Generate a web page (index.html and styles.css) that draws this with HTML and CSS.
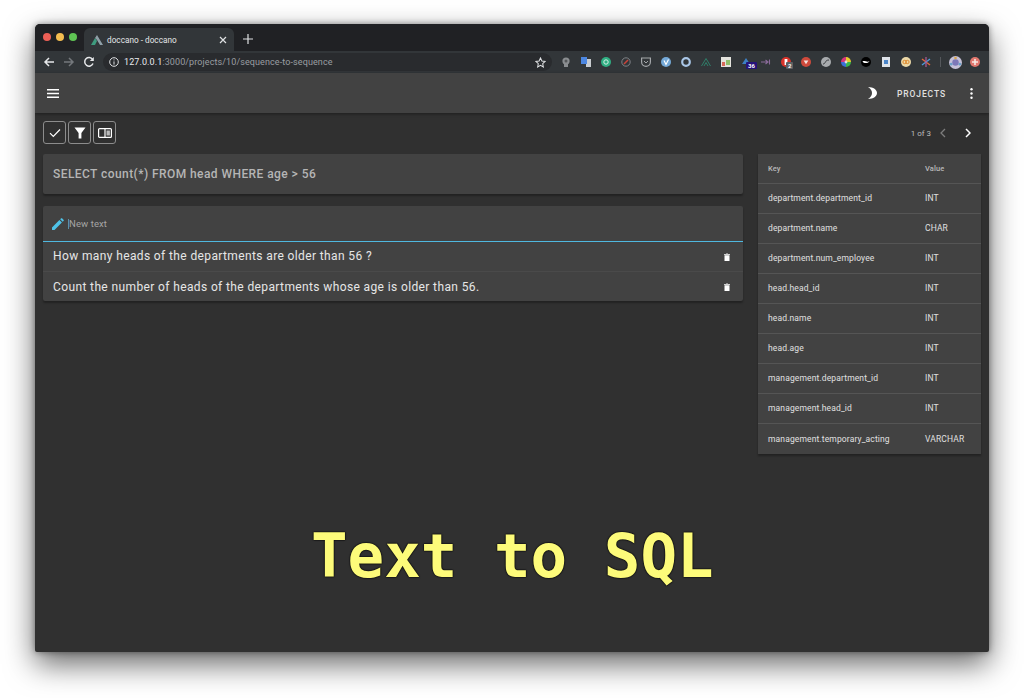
FILE: index.html
```html
<!DOCTYPE html>
<html>
<head>
    <title>doccano - doccano</title>
    <meta charset="utf-8">
    <link rel="stylesheet" href="styles.css">
</head>
<body>
    <div class="window">
        <div class="tabstrip">
            <div class="lights">
                <span class="light red"></span>
                <span class="light yellow"></span>
                <span class="light green"></span>
            </div>
            <div class="tab">
                <svg class="favicon" viewBox="0 0 12 10" width="12" height="10"><path d="M0 10 L4 3 L6 6 L4 10 Z" fill="#3f9c7f"/><path d="M4 3 L6 0 L12 10 L9 10 L6 5 Z" fill="#8fa0a8"/></svg>
                <span class="tab-title">doccano - doccano</span>
                <svg class="tab-close" viewBox="0 0 8 8" width="8" height="8"><path d="M1 1 L7 7 M7 1 L1 7" stroke="#dfe1e3" stroke-width="1.2"/></svg>
            </div>
            <svg class="new-tab" viewBox="0 0 10 10" width="10" height="10"><path d="M5 0 V10 M0 5 H10" stroke="#dfe1e3" stroke-width="1.2"/></svg>
        </div>

        <div class="urlbar">
            <svg class="nav" viewBox="0 0 12 12" width="12" height="12"><path d="M11 6 H2 M6 2 L2 6 L6 10" fill="none" stroke="#e6e8ea" stroke-width="1.5"/></svg>
            <svg class="nav" viewBox="0 0 12 12" width="12" height="12"><path d="M1 6 H10 M6 2 L10 6 L6 10" fill="none" stroke="#74787c" stroke-width="1.5"/></svg>
            <svg class="nav" viewBox="0 0 12 12" width="12" height="12"><path d="M10 7.5 A4.3 4.3 0 1 1 9.6 3.4" fill="none" stroke="#e6e8ea" stroke-width="1.5"/><path d="M10.8 1 V5 H6.8 Z" fill="#e6e8ea"/></svg>
            <div class="omnibox">
                <svg viewBox="0 0 10 10" width="10" height="10"><circle cx="5" cy="5" r="4.3" fill="none" stroke="#dfe1e3"/><path d="M5 4.4 V7.6 M5 2.4 V3.4" stroke="#dfe1e3"/></svg>
                <span class="url"><b>127.0.0.1</b>:3000/projects/10/sequence-to-sequence</span>
                <svg class="star" viewBox="0 0 12 12" width="11" height="11"><path d="M6 1 L7.5 4.4 L11 4.8 L8.4 7.2 L9.1 10.8 L6 9 L2.9 10.8 L3.6 7.2 L1 4.8 L4.5 4.4 Z" fill="none" stroke="#dfe1e3" stroke-width="1.1"/></svg>
            </div>
            <div class="extensions">
                <span class="ext"><svg viewBox="0 0 10 10"><circle cx="5" cy="4" r="3.6" fill="#8a8d90"/><rect x="3" y="7" width="4" height="3" fill="#8a8d90"/><circle cx="5" cy="4" r="1.5" fill="#55585a"/></svg></span>
                <span class="ext"><svg viewBox="0 0 10 10"><rect x="5" y="2" width="5" height="8" fill="#c9ccd0"/><rect x="0" y="0" width="6" height="7" fill="#4c86e0"/></svg></span>
                <span class="ext"><svg viewBox="0 0 10 10"><circle cx="5" cy="5" r="5" fill="#2fae82"/><circle cx="5" cy="5" r="2.2" fill="none" stroke="#d6f0e6"/></svg></span>
                <span class="ext"><svg viewBox="0 0 10 10"><circle cx="5" cy="5" r="4.2" fill="none" stroke="#7e8286"/><path d="M3 7 L7 3" stroke="#c9433a" stroke-width="1.6"/></svg></span>
                <span class="ext"><svg viewBox="0 0 10 10"><path d="M0.6 1 H9.4 V5 A4.4 4.4 0 0 1 0.6 5 Z" fill="none" stroke="#a4a7aa" stroke-width="1.2"/><path d="M3 4 L5 6 L7 4" fill="none" stroke="#a4a7aa"/></svg></span>
                <span class="ext"><svg viewBox="0 0 10 10"><circle cx="5" cy="5" r="5" fill="#74a9d8"/><path d="M3 3.5 L5 7.5 L7.5 2.5" fill="none" stroke="#fff" stroke-width="1.2"/></svg></span>
                <span class="ext"><svg viewBox="0 0 10 10"><circle cx="5" cy="5" r="3.8" fill="none" stroke="#a9c6e6" stroke-width="2.2"/></svg></span>
                <span class="ext"><svg viewBox="0 0 10 10"><path d="M0.5 9 L5 1.5 L9.5 9 M3 9 L5 5.5 L7 9" fill="none" stroke="#2f7f6a" stroke-width="1"/></svg></span>
                <span class="ext"><svg viewBox="0 0 10 10"><rect width="10" height="10" fill="#e4e4de"/><rect x="1" y="5" width="3" height="4" fill="#d76a5a"/><rect x="5" y="3" width="4" height="5" fill="#8fbf6a"/></svg></span>
                <span class="ext ext-badged"><svg viewBox="0 0 10 10"><path d="M1 7 L5 1 L9 7 Z" fill="#3d7fc4"/></svg><em class="badge badge-blue">36</em></span>
                <span class="ext"><svg viewBox="0 0 10 10"><path d="M0 5 H7 M4.5 3 L7 5 L4.5 7 M8.5 2.5 V7.5" fill="none" stroke="#8a6a9a" stroke-width="1.1"/></svg></span>
                <span class="ext ext-badged"><svg viewBox="0 0 10 10"><circle cx="5" cy="5" r="5" fill="#d9342b"/><rect x="3.6" y="2" width="2.8" height="6" fill="#fff"/></svg><em class="badge badge-grey">2</em></span>
                <span class="ext"><svg viewBox="0 0 10 10"><circle cx="5" cy="5" r="5" fill="#cf4a3c"/><path d="M2.6 3.6 H7.4 L5 7.2 Z" fill="#f4e4e0"/></svg></span>
                <span class="ext"><svg viewBox="0 0 10 10"><circle cx="5" cy="5" r="5" fill="#a8abae"/><path d="M2 7 C5 7 3.5 3 8 3" fill="none" stroke="#3a3d40" stroke-width="1"/></svg></span>
                <span class="ext"><svg viewBox="0 0 10 10"><path d="M5 5 L5 0 A5 5 0 0 1 10 5 Z" fill="#e8c92e"/><path d="M5 5 L10 5 A5 5 0 0 1 5 10 Z" fill="#3ab54a"/><path d="M5 5 L5 10 A5 5 0 0 1 0 5 Z" fill="#3a6fd8"/><path d="M5 5 L0 5 A5 5 0 0 1 5 0 Z" fill="#d8357a"/><circle cx="5" cy="5" r="1.4" fill="#ddd"/></svg></span>
                <span class="ext"><svg viewBox="0 0 10 10"><circle cx="5" cy="5" r="5" fill="#000"/><path d="M1.5 4.5 C3 3 7 6 8.5 3.8 C8 6.4 3 7 1.5 4.5 Z" fill="#fff"/></svg></span>
                <span class="ext"><svg viewBox="0 0 10 10"><rect x="1" width="8" height="10" fill="#dfe4ea"/><rect x="3" y="3" width="4" height="4" fill="#4c86c9"/></svg></span>
                <span class="ext"><svg viewBox="0 0 10 10"><circle cx="5" cy="5" r="5" fill="#ecd9a8"/><circle cx="3.6" cy="5" r="1.7" fill="none" stroke="#e08a2e"/><circle cx="6.4" cy="5" r="1.7" fill="none" stroke="#e08a2e"/></svg></span>
                <span class="ext"><svg viewBox="0 0 10 10"><path d="M1 2 L9 8" stroke="#e0653a" stroke-width="1.4"/><path d="M9 2 L1 8" stroke="#4c9ad8" stroke-width="1.4"/><path d="M5 0 V10" stroke="#b05a9a" stroke-width="1.2"/></svg></span>
                <span class="ext-sep"></span>
                <span class="ext ext-avatar"><svg viewBox="0 0 12 12"><circle cx="6" cy="6" r="6" fill="#c6c2d8"/><circle cx="6" cy="6" r="3" fill="#7d78b8"/><circle cx="6" cy="1.8" r="1.2" fill="#d8a74a"/><circle cx="2" cy="7.5" r="1.2" fill="#6aa0c8"/><circle cx="10" cy="7.5" r="1.2" fill="#6aa0c8"/></svg></span>
                <span class="ext"><svg viewBox="0 0 10 10"><circle cx="5" cy="5" r="5" fill="#e0776e"/><path d="M5 2 V8 M2 5 H8" stroke="#f8e8e4" stroke-width="1.6"/></svg></span>
            </div>
        </div>

        <header class="appbar">
            <svg class="menu" viewBox="0 0 12 9" width="12" height="9"><path d="M0 .75 H12 M0 4.5 H12 M0 8.25 H12" stroke="#fff" stroke-width="1.3"/></svg>
            <svg class="moon" viewBox="0 0 9 12" width="9" height="12"><path d="M0 0 C5.5 0 9 2.8 9 6 C9 9.2 5.5 12 0 12 C2.6 10.4 4 8.2 4 6 C4 3.8 2.6 1.6 0 0 Z" fill="#fff"/></svg>
            <span class="projects">PROJECTS</span>
            <svg class="kebab" viewBox="0 0 3 11" width="3" height="11"><circle cx="1.5" cy="1.3" r="1.2" fill="#fff"/><circle cx="1.5" cy="5.5" r="1.2" fill="#fff"/><circle cx="1.5" cy="9.7" r="1.2" fill="#fff"/></svg>
        </header>

        <main class="content">
            <div class="toolbar">
                <button class="tool"><svg viewBox="0 0 12 10" width="12" height="10"><path d="M1 5.2 L4.3 8.5 L11 1.5" fill="none" stroke="#fff" stroke-width="1.2"/></svg></button>
                <button class="tool"><svg viewBox="0 0 12 12" width="12" height="12"><path d="M0.5 0.5 H11.5 L7.4 6 V11.5 H4.6 V6 Z" fill="#fff"/></svg></button>
                <button class="tool"><svg viewBox="0 0 14 10" width="14" height="10"><rect x="0.6" y="0.6" width="12.8" height="8.8" rx="1" fill="none" stroke="#fff" stroke-width="1.2"/><path d="M7 0.6 V9.4" stroke="#fff" stroke-width="1.2"/><rect x="8.5" y="2.5" width="3.4" height="5" fill="#bbb"/></svg></button>
                <div class="pager">
                    <span>1 of 3</span>
                    <svg viewBox="0 0 6 10" width="6" height="10"><path d="M5 1 L1 5 L5 9" fill="none" stroke="#7d7d7d" stroke-width="1.3"/></svg>
                    <svg viewBox="0 0 6 10" width="6" height="10"><path d="M1 1 L5 5 L1 9" fill="none" stroke="#fff" stroke-width="1.5"/></svg>
                </div>
            </div>

            <div class="columns">
                <div class="left">
                    <div class="card source">SELECT count(*) FROM head WHERE age &gt; 56</div>
                    <div class="card">
                        <div class="new-text">
                            <svg viewBox="0 0 12 12" width="12" height="12"><path d="M0 12 V9.5 L7.4 2.1 L9.9 4.6 L2.5 12 Z M8.2 1.3 L9.2 .3 Q9.6 0 10 .3 L11.7 2 Q12 2.4 11.7 2.8 L10.7 3.8 Z" fill="#4fc3e8"/></svg>
                            <span class="caret"></span><span>New text</span>
                        </div>
                        <div class="sentence">
                            <span>How many heads of the departments are older than 56 ?</span>
                            <svg viewBox="0 0 6 8" width="6" height="8"><path d="M0 1 H2 L2.3 .4 H3.7 L4 1 H6 V1.8 H0 Z M.5 2.3 H5.5 V8 H.5 Z" fill="#fff"/></svg>
                        </div>
                        <div class="sentence">
                            <span>Count the number of heads of the departments whose age is older than 56.</span>
                            <svg viewBox="0 0 6 8" width="6" height="8"><path d="M0 1 H2 L2.3 .4 H3.7 L4 1 H6 V1.8 H0 Z M.5 2.3 H5.5 V8 H.5 Z" fill="#fff"/></svg>
                        </div>
                    </div>
                </div>

                <table class="schema">
                    <thead>
                        <tr><th>Key</th><th>Value</th></tr>
                    </thead>
                    <tbody>
                        <tr><td>department.department_id</td><td>INT</td></tr>
                        <tr><td>department.name</td><td>CHAR</td></tr>
                        <tr><td>department.num_employee</td><td>INT</td></tr>
                        <tr><td>head.head_id</td><td>INT</td></tr>
                        <tr><td>head.name</td><td>INT</td></tr>
                        <tr><td>head.age</td><td>INT</td></tr>
                        <tr><td>management.department_id</td><td>INT</td></tr>
                        <tr><td>management.head_id</td><td>INT</td></tr>
                        <tr class="last"><td>management.temporary_acting</td><td>VARCHAR</td></tr>
                    </tbody>
                </table>
            </div>

            <div class="caption">Text to SQL</div>
        </main>
    </div>
</body>
</html>
```

FILE: styles.css
```css
html, body {
    margin: 0;
    height: 698px;
    overflow: hidden;
    background-color: #fff;
}

body {
    padding: 24px 35px 0;
    box-sizing: border-box;
    font-family: 'Roboto', 'Liberation Sans', sans-serif;
    color: #fff;
}

.window {
    display: flex;
    flex-direction: column;
    width: 954px;
    height: 628px;
    border-radius: 5px 5px 2px 2px;
    overflow: hidden;
    background-color: #303030;
    box-shadow: 0 12px 30px rgba(0, 0, 0, 0.6), 0 0 6px rgba(0, 0, 0, 0.4);
}

.tabstrip {
    display: flex;
    align-items: flex-end;
    height: 27px;
    background-color: #202124;
    flex-shrink: 0;
}

.lights {
    display: flex;
    gap: 5px;
    align-self: flex-start;
    margin: 9px 0 0 8px;
    width: 41px;
}

.light {
    width: 8px;
    height: 8px;
    border-radius: 50%;
}

.red { background-color: #ed5f56; }
.yellow { background-color: #f4bd4f; }
.green { background-color: #5fc454; }

.tab {
    display: flex;
    align-items: center;
    width: 150px;
    height: 23px;
    box-sizing: border-box;
    padding: 0 7px 0 7px;
    border-radius: 6px 6px 0 0;
    background-color: #323639;
}

.favicon {
    margin-right: 4px;
}

.tab-title {
    flex: 1;
    font-size: 8.2px;
    letter-spacing: 0.02px;
    color: #e4e6e8;
}

.new-tab {
    margin: 0 0 7px 9px;
}

.urlbar {
    display: flex;
    align-items: center;
    height: 22px;
    padding-left: 8px;
    background-color: #323639;
    flex-shrink: 0;
}

.nav {
    margin-right: 8px;
}

.omnibox {
    display: flex;
    align-items: center;
    width: 449px;
    height: 18px;
    padding: 0 6px;
    box-sizing: border-box;
    border-radius: 9px;
    background-color: #292b2e;
}

.url {
    flex: 1;
    margin-left: 5px;
    font-size: 9px;
    letter-spacing: 0.1px;
    color: #9a9ea2;
}

.url b {
    font-weight: 400;
    color: #e8eaed;
}

.extensions {
    display: flex;
    align-items: center;
    margin-left: 4px;
}

.ext {
    position: relative;
    display: flex;
    justify-content: center;
    width: 20px;
}

.ext svg {
    width: 10px;
    height: 10px;
}

.ext-avatar svg {
    width: 13px;
    height: 13px;
}

.badge {
    position: absolute;
    left: 10px;
    top: 5px;
    padding: 0 2px;
    border-radius: 1px;
    font-size: 6px;
    line-height: 7px;
    font-style: normal;
    font-weight: 700;
}

.badge-blue { background-color: #26137a; }
.badge-grey { background-color: #5f6164; }

.ext-sep {
    width: 1px;
    height: 10px;
    margin: 0 4px 0 4px;
    background-color: #55585c;
}

.appbar {
    display: flex;
    align-items: center;
    height: 40px;
    padding: 0 16px 0 12px;
    background-color: #424242;
    box-shadow: 0 1px 3px rgba(0, 0, 0, 0.4);
    flex-shrink: 0;
    z-index: 1;
}

.moon {
    margin-left: auto;
    margin-right: 20px;
}

.projects {
    margin-top: 1px;
    margin-right: 24px;
    font-size: 8.5px;
    font-weight: 500;
    letter-spacing: 0.9px;
    color: #e0e0e0;
}

.content {
    position: relative;
    flex: 1;
    padding: 8px 8px 0;
}

.toolbar {
    display: flex;
    align-items: center;
    gap: 2px;
    height: 23px;
    margin-bottom: 10px;
}

.tool {
    display: flex;
    align-items: center;
    justify-content: center;
    width: 23px;
    height: 23px;
    padding: 0;
    border: 1px solid #8c8c8c;
    border-radius: 3px;
    background: none;
}

.pager {
    display: flex;
    align-items: center;
    gap: 9px;
    margin-left: auto;
    margin-right: 10px;
    font-size: 8px;
    color: #bdbdbd;
}

.pager span {
    margin-top: 1px;
}

.pager svg + svg {
    margin-left: 10px;
}

.columns {
    display: flex;
    align-items: flex-start;
    gap: 15px;
}

.left {
    display: flex;
    flex-direction: column;
    gap: 12px;
    width: 700px;
}

.card {
    border-radius: 2px;
    background-color: #424242;
    box-shadow: 0 2px 2px rgba(0, 0, 0, 0.3);
}

.source {
    height: 40px;
    padding: 0 10px;
    line-height: 40px;
    font-size: 12px;
    font-weight: 500;
    letter-spacing: 0.43px;
    color: #b5b5b5;
}

.new-text {
    display: flex;
    align-items: center;
    height: 35px;
    padding: 0 10px 0 9px;
    border-bottom: 1px solid #4fb8e0;
    font-size: 9.5px;
    letter-spacing: 0.1px;
    color: #a5a5a5;
}

.caret {
    width: 1px;
    height: 10px;
    margin-left: 4px;
    background-color: #5a8fa8;
}

.sentence {
    display: flex;
    align-items: center;
    justify-content: space-between;
    height: 29px;
    padding: 0 13px 0 10px;
    font-size: 12px;
    letter-spacing: 0.38px;
    color: #e6e6e6;
}

.new-text + .sentence span {
    margin-bottom: 2px;
}

.sentence + .sentence {
    height: 30px;
    border-top: 1px solid #4a4a4a;
    box-sizing: border-box;
}

.schema {
    width: 223px;
    border-collapse: collapse;
    background-color: #424242;
    box-shadow: 0 2px 2px rgba(0, 0, 0, 0.3);
    font-size: 8.5px;
    letter-spacing: 0.13px;
    text-align: left;
    color: #e0e0e0;
}

.schema th {
    height: 28px;
    padding: 0 10px 1px;
    font-size: 7.5px;
    font-weight: 500;
    color: #b8b8b8;
}

.schema td {
    height: 28px;
    padding: 0 10px 1px;
    border-top: 1px solid #555;
}

.schema .last td {
    height: 29px;
}

.schema th:first-child,
.schema td:first-child {
    width: 137px;
}

.caption {
    position: absolute;
    left: 276px;
    top: 408px;
    font-family: 'DejaVu Sans Mono', 'Liberation Mono', monospace;
    font-size: 60.8px;
    line-height: 70px;
    font-weight: 700;
    white-space: pre;
    color: #fdfb7a;
    text-shadow: 0 0 2px #000, 0 0 1px #000, 0 0 1px #000;
}
```
